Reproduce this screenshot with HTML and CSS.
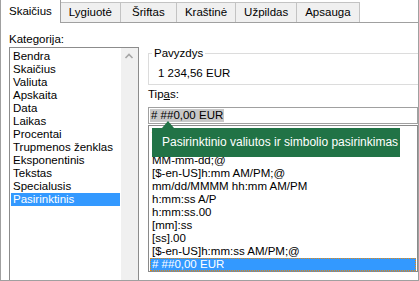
FILE: index.html
```html
<!DOCTYPE html>
<html lang="lt">

<head>
    <meta charset="UTF-8">
    <meta name="viewport" content="width=device-width, initial-scale=1.0">
    <title>Formatuoti langelius</title>
    <link rel="stylesheet" href="styles.css">
</head>

<body>
    <div class="dialog">
        <div class="tabs">
            <div class="tab active">Skaičius</div>
            <div class="tab">Lygiuotė</div>
            <div class="tab">Šriftas</div>
            <div class="tab">Kraštinė</div>
            <div class="tab">Užpildas</div>
            <div class="tab">Apsauga</div>
        </div>

        <div class="pane">
            <!-- Category list -->
            <div class="category">
                <div class="label">Kate<u>g</u>orija:</div>
                <div class="listbox">
                    <ul class="items">
                        <li>Bendra</li>
                        <li>Skaičius</li>
                        <li>Valiuta</li>
                        <li>Apskaita</li>
                        <li>Data</li>
                        <li>Laikas</li>
                        <li>Procentai</li>
                        <li>Trupmenos ženklas</li>
                        <li>Eksponentinis</li>
                        <li>Tekstas</li>
                        <li>Specialusis</li>
                        <li class="selected">Pasirinktinis</li>
                    </ul>
                    <div class="scrollbar">
                        <svg width="17" height="17" viewBox="0 0 17 17">
                            <polyline points="4.5,10 8,6.5 11.5,10" fill="none" stroke="#a6a6a6" stroke-width="1.6" />
                        </svg>
                    </div>
                </div>
            </div>

            <!-- Format type -->
            <div class="format">
                <fieldset class="sample">
                    <legend>Pavyzdys</legend>
                    <div class="sample-value">1 234,56 EUR</div>
                </fieldset>

                <div class="label type-label">Tip<u>a</u>s:</div>

                <div class="type-field">
                    <div class="type-input"><span class="sel"># ##0,00 EUR</span></div>
                    <ul class="type-list">
                        <li>yyyy-MM-dd</li>
                        <li>[$-lt-LT]yyyy MMMM d</li>
                        <li>MM-mm-dd;@</li>
                        <li>[$-en-US]h:mm AM/PM;@</li>
                        <li>mm/dd/MMMM hh:mm AM/PM</li>
                        <li>h:mm:ss A/P</li>
                        <li>h:mm:ss.00</li>
                        <li>[mm]:ss</li>
                        <li>[ss].00</li>
                        <li>[$-en-US]h:mm:ss AM/PM;@</li>
                        <li class="selected"># ##0,00 EUR</li>
                    </ul>

                    <div class="tooltip">Pasirinktinio valiutos ir simbolio pasirinkimas</div>
                </div>
            </div>
        </div>
    </div>
</body>

</html>
```

FILE: styles.css
```css
body {
    margin: 0;
    font-family: "Liberation Sans", Arial, sans-serif;
    font-size: 11.5px;
    color: #000;
    background-color: #fff;
}

.dialog {
    width: 419px;
    height: 281px;
    box-sizing: border-box;
    border: 1px solid #a0a0a0;
    border-top: none;
    overflow: hidden;
    background-color: #fff;
}

/* Tab strip */
.tabs {
    display: flex;
    align-items: flex-end;
    height: 23px;
    box-sizing: border-box;
    border-bottom: 1px solid #a0a0a0;
}

.tab {
    height: 20px;
    min-width: 56px;
    padding: 0 8px;
    box-sizing: border-box;
    line-height: 19px;
    text-align: center;
    background-color: #f0f0f0;
    border-top: 1px solid #c3c3c3;
    border-right: 1px solid #c3c3c3;
}

.tab.active {
    position: relative;
    height: 23px;
    margin-bottom: -1px;
    line-height: 23px;
    background-color: #fff;
    border-top: none;
    border-right-color: #a0a0a0;
}

.pane {
    display: flex;
    padding-left: 8px;
}

.label {
    line-height: 15px;
}

/* Category list */
.category {
    width: 130px;
    padding-top: 9px;
}

.listbox {
    display: flex;
    height: 240px;
    border: 1px solid #8c8c8c;
}

.items {
    list-style: none;
    margin: 0;
    padding: 2px 0 0;
    width: 111px;
}

.items li {
    margin: 0 1px;
    padding-left: 2px;
    line-height: 13px;
    white-space: nowrap;
}

.items li.selected {
    background-color: #3399ff;
    color: #fff;
}

.scrollbar {
    width: 17px;
    background-color: #f0f0f0;
}

.scrollbar svg {
    display: block;
}

/* Type column */
.format {
    flex: 1;
    min-width: 0;
    margin-left: 9px;
    padding-top: 23px;
}

.sample {
    margin: 0;
    padding: 5px 0 3px;
    border: 1px solid #dcdcdc;
    border-right: none;
}

.sample legend {
    margin-left: 3px;
    padding: 0 2px;
    line-height: 15px;
}

.sample-value {
    padding-left: 9px;
    line-height: 15px;
}

.type-label {
    margin-top: 2px;
}

.type-field {
    position: relative;
    margin-top: 5px;
}

.type-input {
    height: 17px;
    box-sizing: border-box;
    padding: 1px;
    border: 1px solid #a0a0a0;
}

.type-input .sel {
    display: inline-block;
    padding: 0 1px;
    line-height: 13px;
    background-color: #c8c8c8;
}

.type-list {
    list-style: none;
    height: 147px;
    box-sizing: border-box;
    margin: 1px 0 0;
    padding: 2px 0 0;
    border: 1px solid #8a8a8a;
    overflow: hidden;
}

.type-list li {
    margin: 0 1px;
    padding-left: 1px;
    line-height: 11px;
    border: 1px solid transparent;
    white-space: nowrap;
}

.type-list li.selected {
    background-color: #3399ff;
    color: #fff;
    border: 1px dotted #e8890c;
}

/* Green hint bubble */
.tooltip {
    position: absolute;
    left: 4px;
    top: 21px;
    width: 248px;
    height: 29px;
    box-sizing: border-box;
    padding-left: 10px;
    font-size: 12px;
    line-height: 29px;
    color: #fff;
    background-color: #217346;
    white-space: nowrap;
}

.tooltip::before {
    content: "";
    position: absolute;
    left: 10px;
    top: -7px;
    border-left: 6px solid transparent;
    border-right: 6px solid transparent;
    border-bottom: 7px solid #217346;
}
```
